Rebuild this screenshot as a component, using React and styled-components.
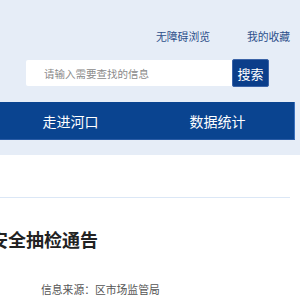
import React from 'react';
import styled, { createGlobalStyle } from 'styled-components';

const GlobalStyle = createGlobalStyle`
  html, body {
    margin: 0;
    padding: 0;
    background: #e6edf7;
    font-family: "Noto Sans CJK SC", "Microsoft YaHei", sans-serif;
    overflow: hidden;
  }
`;

const Header = styled.header`
  background: #e6edf7;
  padding-top: 28px;
  height: 155px;
  box-sizing: border-box;
`;

const TopLinks = styled.div`
  display: flex;
  height: 16px;
  align-items: center;
  padding-left: 156px;
  gap: 37px;
`;

const TopLink = styled.a`
  font-size: 10.8px;
  line-height: 16px;
  color: #2d4f8a;
  text-decoration: none;
`;

const SearchRow = styled.form`
  display: flex;
  align-items: center;
  margin: 15px 0 0 26px;
  height: 28px;
`;

const SearchInput = styled.input`
  width: 206px;
  height: 26px;
  box-sizing: border-box;
  border: none;
  outline: none;
  border-radius: 2px 0 0 2px;
  background: #fff;
  padding: 0 0 0 18px;
  font-family: inherit;
  font-size: 10.5px;
  &::placeholder {
    color: #8a8a8a;
  }
`;

const SearchButton = styled.button`
  width: 37px;
  height: 28px;
  border: 1px solid #3b64a8;
  border-radius: 2px;
  background: #0b3e8a;
  color: #fff;
  font-family: inherit;
  font-size: 13px;
  padding: 0;
`;

const Nav = styled.nav`
  display: flex;
  margin-top: 15px;
  width: 295px;
  height: 38px;
  box-sizing: border-box;
  background: #0a4490;
  border-right: 1px solid #3a70bd;
  border-bottom: 1px solid #2a5ca6;
`;

const NavItem = styled.a`
  flex: 0 0 147px;
  display: flex;
  align-items: center;
  justify-content: center;
  color: #fff;
  font-size: 14px;
  text-decoration: none;
  margin-left: ${p => (p.first ? '-3px' : '0')};
`;

const Content = styled.main`
  background: #fff;
  height: 145px;
  padding-top: 42px;
  box-sizing: border-box;
`;

const Divider = styled.div`
  width: 290px;
  height: 1px;
  background: #dbe7f6;
`;

const Title = styled.h1`
  margin: 29px 0 0 -10px;
  font-size: 18px;
  line-height: 24px;
  font-weight: bold;
  color: #222;
  white-space: nowrap;
`;

const Source = styled.p`
  margin: 30px 0 0 41px;
  font-size: 10.8px;
  line-height: 16px;
  color: #555;
`;

export default function App() {
  return (
    <>
      <GlobalStyle />
      <Header>
        <TopLinks>
          <TopLink href="#">无障碍浏览</TopLink>
          <TopLink href="#">我的收藏</TopLink>
        </TopLinks>
        <SearchRow onSubmit={e => e.preventDefault()}>
          <SearchInput placeholder="请输入需要查找的信息" />
          <SearchButton type="submit">搜索</SearchButton>
        </SearchRow>
        <Nav>
          <NavItem href="#" first>走进河口</NavItem>
          <NavItem href="#">数据统计</NavItem>
        </Nav>
      </Header>
      <Content>
        <Divider />
        <Title>安全抽检通告</Title>
        <Source>信息来源：区市场监管局</Source>
      </Content>
    </>
  );
}
